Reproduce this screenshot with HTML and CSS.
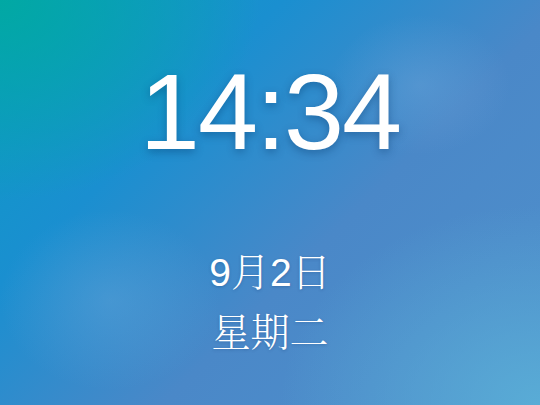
FILE: index.html
```html
<!DOCTYPE html>
<html lang="zh-CN">
<head>
<meta charset="utf-8">
<link rel="stylesheet" href="styles.css">
</head>
<body>
<div class="screen">
  <div class="time">14:34</div>
  <div class="date">9月2日</div>
  <div class="weekday">星期二</div>
</div>
</body>
</html>
```
FILE: styles.css
```css
html, body {
  margin: 0;
  padding: 0;
}
.screen {
  width: 540px;
  height: 405px;
  overflow: hidden;
  box-sizing: border-box;
  display: flex;
  flex-direction: column;
  align-items: center;
  color: #fff;
  font-family: "Liberation Sans", Arial, "AR PL UMing CN", "AR PL UMing TW", "Noto Serif CJK SC", "Source Han Serif SC", serif;
  background:
    radial-gradient(ellipse 90px 70px at 420px 85px, rgba(120,170,220,0.35), rgba(120,170,220,0) 100%),
    radial-gradient(ellipse 110px 90px at 110px 300px, rgba(110,170,220,0.35), rgba(110,170,220,0) 100%),
    radial-gradient(ellipse 260px 200px at 0px 0px, rgba(0,170,160,0.9), rgba(0,170,160,0) 100%),
    radial-gradient(ellipse 260px 200px at 540px 405px, rgba(90,175,215,0.9), rgba(90,175,215,0) 100%),
    linear-gradient(135deg, #0a9cc4 0%, #1a8fd0 30%, #4a88c8 60%, #5090cc 100%);
  padding-top: 45px;
}
.time {
  font-size: 108px;
  line-height: 134px;
  letter-spacing: -2px;
  text-shadow: 0 3px 8px rgba(0, 40, 90, 0.35);
}
.date {
  margin-top: 70px;
  font-size: 39px;
  font-weight: 300;
  line-height: 48px;
  text-shadow: 0 1px 3px rgba(0, 40, 90, 0.25);
}
.weekday {
  margin-top: 12px;
  font-size: 39px;
  font-weight: 300;
  line-height: 48px;
  text-shadow: 0 1px 3px rgba(0, 40, 90, 0.25);
}
```
